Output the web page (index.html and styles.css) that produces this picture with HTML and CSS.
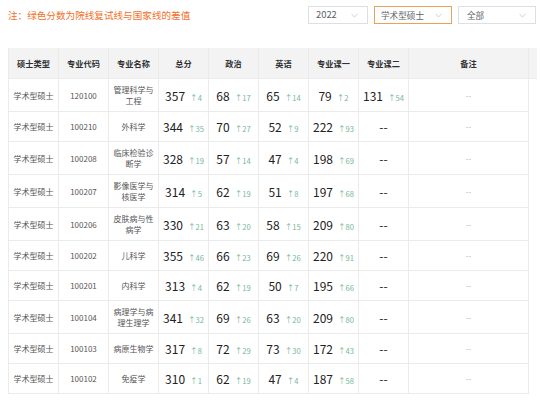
FILE: index.html
```html
<!DOCTYPE html>
<html lang="zh">
<head>
<meta charset="utf-8">
<link rel="stylesheet" href="styles.css">
</head>
<body>
<div class="page">
  <div class="topbar">
    <div class="note">注：绿色分数为院线复试线与国家线的差值</div>
    <div class="filters">
      <div class="select s-year"><span>2022</span><svg class="chev" width="7" height="5" viewBox="0 0 7 5"><path d="M0.5 0.8 L3.5 4 L6.5 0.8" fill="none" stroke="#c0c4cc" stroke-width="0.8"/></svg></div>
      <div class="select s-type active"><span>学术型硕士</span><svg class="chev" width="7" height="5" viewBox="0 0 7 5"><path d="M0.5 0.8 L3.5 4 L6.5 0.8" fill="none" stroke="#c0c4cc" stroke-width="0.8"/></svg></div>
      <div class="select s-all"><span>全部</span><svg class="chev" width="7" height="5" viewBox="0 0 7 5"><path d="M0.5 0.8 L3.5 4 L6.5 0.8" fill="none" stroke="#c0c4cc" stroke-width="0.8"/></svg></div>
    </div>
  </div>
  <table class="grid">
    <colgroup>
      <col class="c-first"><col class="c-std"><col class="c-std"><col class="c-std"><col class="c-std"><col class="c-std"><col class="c-std"><col class="c-std"><col class="c-note"><col class="c-gutter">
    </colgroup>
    <thead>
      <tr>
        <th class="first">硕士类型</th><th>专业代码</th><th>专业名称</th><th>总分</th><th>政治</th><th>英语</th><th>专业课一</th><th>专业课二</th><th>备注</th><th class="gutter"></th>
      </tr>
    </thead>
    <tbody>
      <tr><td class="first txt">学术型硕士</td><td class="txt">120100</td><td class="txt">管理科学与工程</td><td><span class="n">357</span><span class="d">↑4</span></td><td><span class="n">68</span><span class="d">↑17</span></td><td><span class="n">65</span><span class="d">↑14</span></td><td><span class="n">79</span><span class="d">↑2</span></td><td><span class="n">131</span><span class="d">↑54</span></td><td class="rem">--</td><td class="gutter"></td></tr>
      <tr><td class="first txt">学术型硕士</td><td class="txt">100210</td><td class="txt">外科学</td><td><span class="n">344</span><span class="d">↑35</span></td><td><span class="n">70</span><span class="d">↑27</span></td><td><span class="n">52</span><span class="d">↑9</span></td><td><span class="n">222</span><span class="d">↑93</span></td><td class="dash">--</td><td class="rem">--</td><td class="gutter"></td></tr>
      <tr><td class="first txt">学术型硕士</td><td class="txt">100208</td><td class="txt">临床检验诊断学</td><td><span class="n">328</span><span class="d">↑19</span></td><td><span class="n">57</span><span class="d">↑14</span></td><td><span class="n">47</span><span class="d">↑4</span></td><td><span class="n">198</span><span class="d">↑69</span></td><td class="dash">--</td><td class="rem">--</td><td class="gutter"></td></tr>
      <tr><td class="first txt">学术型硕士</td><td class="txt">100207</td><td class="txt">影像医学与核医学</td><td><span class="n">314</span><span class="d">↑5</span></td><td><span class="n">62</span><span class="d">↑19</span></td><td><span class="n">51</span><span class="d">↑8</span></td><td><span class="n">197</span><span class="d">↑68</span></td><td class="dash">--</td><td class="rem">--</td><td class="gutter"></td></tr>
      <tr><td class="first txt">学术型硕士</td><td class="txt">100206</td><td class="txt">皮肤病与性病学</td><td><span class="n">330</span><span class="d">↑21</span></td><td><span class="n">63</span><span class="d">↑20</span></td><td><span class="n">58</span><span class="d">↑15</span></td><td><span class="n">209</span><span class="d">↑80</span></td><td class="dash">--</td><td class="rem">--</td><td class="gutter"></td></tr>
      <tr><td class="first txt">学术型硕士</td><td class="txt">100202</td><td class="txt">儿科学</td><td><span class="n">355</span><span class="d">↑46</span></td><td><span class="n">66</span><span class="d">↑23</span></td><td><span class="n">69</span><span class="d">↑26</span></td><td><span class="n">220</span><span class="d">↑91</span></td><td class="dash">--</td><td class="rem">--</td><td class="gutter"></td></tr>
      <tr><td class="first txt">学术型硕士</td><td class="txt">100201</td><td class="txt">内科学</td><td><span class="n">313</span><span class="d">↑4</span></td><td><span class="n">62</span><span class="d">↑19</span></td><td><span class="n">50</span><span class="d">↑7</span></td><td><span class="n">195</span><span class="d">↑66</span></td><td class="dash">--</td><td class="rem">--</td><td class="gutter"></td></tr>
      <tr><td class="first txt">学术型硕士</td><td class="txt">100104</td><td class="txt">病理学与病理生理学</td><td><span class="n">341</span><span class="d">↑32</span></td><td><span class="n">69</span><span class="d">↑26</span></td><td><span class="n">63</span><span class="d">↑20</span></td><td><span class="n">209</span><span class="d">↑80</span></td><td class="dash">--</td><td class="rem">--</td><td class="gutter"></td></tr>
      <tr><td class="first txt">学术型硕士</td><td class="txt">100103</td><td class="txt">病原生物学</td><td><span class="n">317</span><span class="d">↑8</span></td><td><span class="n">72</span><span class="d">↑29</span></td><td><span class="n">73</span><span class="d">↑30</span></td><td><span class="n">172</span><span class="d">↑43</span></td><td class="dash">--</td><td class="rem">--</td><td class="gutter"></td></tr>
      <tr><td class="first txt">学术型硕士</td><td class="txt">100102</td><td class="txt">免疫学</td><td><span class="n">310</span><span class="d">↑1</span></td><td><span class="n">62</span><span class="d">↑19</span></td><td><span class="n">47</span><span class="d">↑4</span></td><td><span class="n">187</span><span class="d">↑58</span></td><td class="dash">--</td><td class="rem">--</td><td class="gutter"></td></tr>
    </tbody>
  </table>
</div>
</body>
</html>
```

FILE: styles.css
```css
* { box-sizing: border-box; }
html, body { margin: 0; padding: 0; background: #fff; }
body {
  font-family: "Noto Sans CJK SC", "Noto Sans", sans-serif;
  color: #606266;
}
.page {
  padding: 6px 4px 0 8px;
  width: 541px;
}
.topbar {
  display: flex;
  justify-content: space-between;
  align-items: center;
  height: 18px;
  margin-bottom: 24px;
}
.note {
  font-size: 9.6px;
  color: #f2701f;
}
.filters {
  display: flex;
  gap: 6px;
  margin-right: 1px;
}
.select {
  height: 18px;
  border: 1px solid #dcdfe6;
  display: flex;
  align-items: center;
  justify-content: space-between;
  padding: 0 9px 0 6px;
  font-size: 8.6px;
  color: #606266;
  background: #fff;
}
.select span { line-height: 1; }
.s-year { width: 60px; font-size: 9.4px; padding-left: 7px; }
.s-type { width: 78px; }
.s-all { width: 78px; padding-left: 8px; }
.select.active { border-color: #e9a25a; }
.chev { display: block; }

.grid {
  table-layout: fixed;
  width: 529px;
  border-collapse: separate;
  border-spacing: 0;
}
.c-first { width: 51px; }
.c-std { width: 50px; }
.c-note { width: 120px; }
.c-gutter { width: 8px; }

.grid th {
  background: #f3f3f3;
  font-size: 8.2px;
  font-weight: 700;
  color: #303133;
  height: 31px;
  padding: 0;
  text-align: center;
  border-right: 1px solid #ebebeb;
  border-bottom: 1px solid #ebebeb;
}
.grid th.gutter { border-right: none; }
.grid td {
  text-align: center;
  vertical-align: middle;
  padding: 5px 3px;
  border-right: 1px solid #ebebeb;
  border-bottom: 1px solid #ebebeb;
  white-space: nowrap;
  font-size: 12px;
  line-height: 19px;
}
.grid .first { border-left: 1px solid #ebebeb; }
.grid td.txt {
  font-size: 8px;
  line-height: 11px;
  color: #555;
  white-space: normal;
  word-break: break-all;
}
.grid td.gutter { border: none; padding: 0; }
.n {
  color: #222;
}
.d {
  font-size: 7.6px;
  line-height: 1;
  color: #74b898;
  margin-left: 5px;
}
.dash {
  color: #222;
}
.rem {
  color: #bbb;
}
.grid td.rem { font-size: 8px; }
```
